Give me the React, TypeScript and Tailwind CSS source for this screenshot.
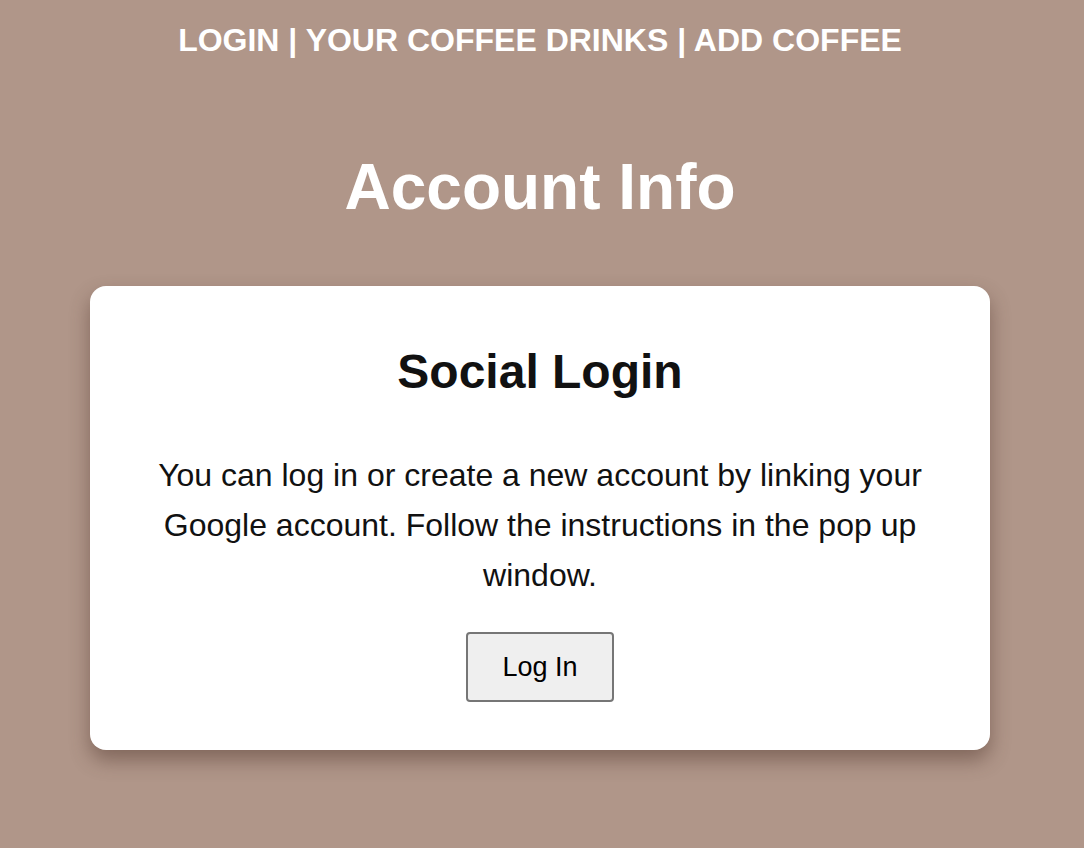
export default function App() {
  return (
    <div className="min-h-[848px] w-full bg-[#b09689] font-['Liberation_Sans',Arial,sans-serif]">
      <div className="w-[1080px] flex flex-col items-center">
        <nav className="pt-[20px] text-[32px] leading-[40px] font-bold text-white">
          LOGIN | YOUR COFFEE DRINKS | ADD COFFEE
        </nav>
        <h1 className="mt-[89px] text-[64px] leading-[76px] font-bold text-white">Account Info</h1>
        <div className="mt-[61px] w-[900px] bg-white rounded-[16px] shadow-[0_10px_20px_rgba(70,45,35,0.45)] px-[60px] pt-[56px] pb-[48px] flex flex-col items-center">
          <h2 className="text-[48px] leading-[60px] font-bold text-[#111]">Social Login</h2>
          <p className="mt-[48px] text-[32px] leading-[50px] text-[#111] text-center">
            You can log in or create a new account by linking your Google account. Follow the instructions in the pop up window.
          </p>
          <button className="mt-[32px] w-[148px] h-[70px] bg-[#efefef] border-2 border-[#767676] rounded-[4px] text-[27px] text-black">
            Log In
          </button>
        </div>
      </div>
    </div>
  );
}
